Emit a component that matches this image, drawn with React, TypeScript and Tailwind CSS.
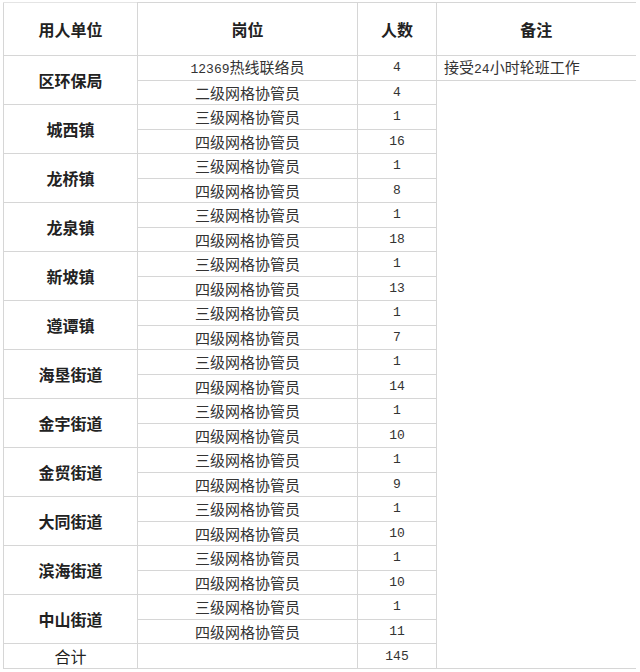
const groups: { unit: string; rows: [string, string][] }[] = [
  { unit: "区环保局", rows: [["12369热线联络员", "4"], ["二级网格协管员", "4"]] },
  { unit: "城西镇", rows: [["三级网格协管员", "1"], ["四级网格协管员", "16"]] },
  { unit: "龙桥镇", rows: [["三级网格协管员", "1"], ["四级网格协管员", "8"]] },
  { unit: "龙泉镇", rows: [["三级网格协管员", "1"], ["四级网格协管员", "18"]] },
  { unit: "新坡镇", rows: [["三级网格协管员", "1"], ["四级网格协管员", "13"]] },
  { unit: "遵谭镇", rows: [["三级网格协管员", "1"], ["四级网格协管员", "7"]] },
  { unit: "海垦街道", rows: [["三级网格协管员", "1"], ["四级网格协管员", "14"]] },
  { unit: "金宇街道", rows: [["三级网格协管员", "1"], ["四级网格协管员", "10"]] },
  { unit: "金贸街道", rows: [["三级网格协管员", "1"], ["四级网格协管员", "9"]] },
  { unit: "大同街道", rows: [["三级网格协管员", "1"], ["四级网格协管员", "10"]] },
  { unit: "滨海街道", rows: [["三级网格协管员", "1"], ["四级网格协管员", "10"]] },
  { unit: "中山街道", rows: [["三级网格协管员", "1"], ["四级网格协管员", "11"]] },
];

const cjk = "font-['Noto_Sans_CJK_SC',sans-serif]";
const num = "font-['Liberation_Mono','Noto_Sans_CJK_SC',monospace] text-[13px]";
const cell = "border border-[#d6d6d6] p-0 align-middle leading-none";

// split a label so digits get the narrow mono face
const Mixed = ({ text }: { text: string }) => (
  <>
    {text.split(/(\d+)/).map((part, i) =>
      /^\d+$/.test(part) ? (
        <span key={i} className={num}>
          {part}
        </span>
      ) : (
        <span key={i}>{part}</span>
      )
    )}
  </>
);

export default function App() {
  const subRows = groups.length * 2;

  return (
    <div className="w-[640px] h-[672px] bg-white pl-[3px] pt-[2px]">
      <table
        className={`border-collapse table-fixed w-[632px] text-[#333] text-[15px] ${cjk}`}
      >
        <colgroup>
          <col className="w-[134px]" />
          <col className="w-[220px]" />
          <col className="w-[79px]" />
          <col className="w-[199px]" />
        </colgroup>
        <thead>
          <tr className="h-[53px]">
            <th className={`${cell} border-t-[#e4e4e4] text-[16px] font-bold text-[#222]`}>用人单位</th>
            <th className={`${cell} text-[16px] font-bold text-[#222]`}>岗位</th>
            <th className={`${cell} text-[16px] font-bold text-[#222]`}>人数</th>
            <th className={`${cell} border-r-0 text-[16px] font-bold text-[#222]`}>备注</th>
          </tr>
        </thead>
        <tbody>
          {groups.map((g, gi) =>
            g.rows.map(([post, count], ri) => (
              <tr key={`${gi}-${ri}`} className="h-[24.5px]">
                {ri === 0 && (
                  <td rowSpan={2} className={`${cell} text-center text-[16px] font-bold text-[#222]`}>
                    {g.unit}
                  </td>
                )}
                <td className={`${cell} text-center`}>
                  <Mixed text={post} />
                </td>
                <td className={`${cell} text-center ${num}`}>{count}</td>
                {gi === 0 && ri === 0 && (
                  <td className={`${cell} border-r-0 pl-[7px] text-left`}>
                    <Mixed text="接受24小时轮班工作" />
                  </td>
                )}
                {gi === 0 && ri === 1 && (
                  <td rowSpan={subRows} className={`${cell} border-r-0`} />
                )}
              </tr>
            ))
          )}
          <tr className="h-[25px]">
            <td className={`${cell} text-center text-[16px] text-[#222]`}>合计</td>
            <td className={cell} />
            <td className={`${cell} text-center ${num}`}>145</td>
          </tr>
        </tbody>
      </table>
    </div>
  );
}
